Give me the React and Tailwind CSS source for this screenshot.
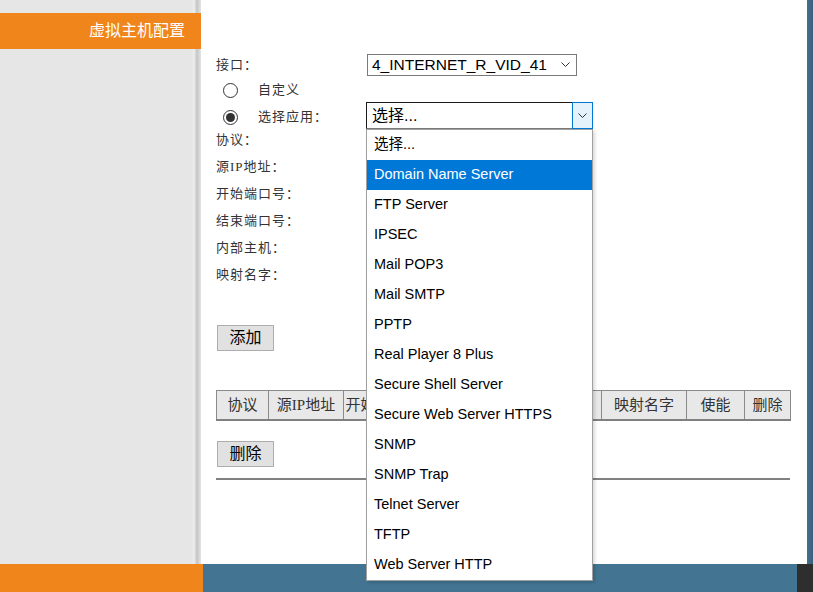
import React from 'react';

const labelFont = { fontFamily: '"Liberation Serif", "Noto Sans CJK SC", serif' };
const uiFont = { fontFamily: '"Liberation Sans", "Noto Sans CJK SC", sans-serif' };

const apps = [
  '选择...',
  'Domain Name Server',
  'FTP Server',
  'IPSEC',
  'Mail POP3',
  'Mail SMTP',
  'PPTP',
  'Real Player 8 Plus',
  'Secure Shell Server',
  'Secure Web Server HTTPS',
  'SNMP',
  'SNMP Trap',
  'Telnet Server',
  'TFTP',
  'Web Server HTTP',
];

const fields = ['协议：', '源IP地址：', '开始端口号：', '结束端口号：', '内部主机：', '映射名字：'];

const columns = [
  { name: '协议', w: 'w-[52px]' },
  { name: '源IP地址', w: 'w-[75px]' },
  { name: '开始端口号', w: 'w-[79px]' },
  { name: '结束端口号', w: 'w-[79px]' },
  { name: '内部主机', w: 'w-[100px]' },
  { name: '映射名字', w: 'w-[85px]' },
  { name: '使能', w: 'w-[58px]' },
  { name: '删除', w: 'w-[46px]' },
];

function Chevron({ className }) {
  return (
    <svg className={className} width="9" height="5" viewBox="0 0 9 5" fill="none">
      <path d="M0.5 0.5 L4.5 4.5 L8.5 0.5" stroke="#333" strokeWidth="1" />
    </svg>
  );
}

function Radio({ checked }) {
  return (
    <span className="ml-[7px] w-[15px] h-[15px] rounded-full border border-[#333] bg-white flex items-center justify-center shrink-0">
      {checked && <span className="w-[9px] h-[9px] rounded-full bg-[#333]" />}
    </span>
  );
}

function Button({ children }) {
  return (
    <button
      className="w-[57px] h-[26px] bg-[#e1e1e1] border border-[#adadad] text-[16px] text-black leading-none"
      style={uiFont}
    >
      {children}
    </button>
  );
}

export default function App() {
  return (
    <div className="w-[813px] h-[592px] overflow-hidden flex flex-col bg-white">
      <div className="flex h-[564px]">
        {/* sidebar */}
        <div className="w-[201px] shrink-0 bg-[linear-gradient(to_right,#e6e6e6_192px,#eeeeee_194px,#c4c4c4_197px,#d6d6d6_199px,#e4e4e4_201px)]">
          <div
            className="mt-[13px] h-[36px] bg-[#f0851b] text-white text-[16px] leading-[36px] text-right pr-[16px]"
            style={uiFont}
          >
            虚拟主机配置
          </div>
        </div>

        {/* content */}
        <div className="flex-1 relative pl-[15px] pr-[16px] pt-[51px] text-[13px] text-[#333] tracking-[1px]" style={labelFont}>
          <div className="flex h-[27px] items-center">
            <div className="w-[151px]">接口：</div>
            <div
              className="w-[210px] h-[22px] border border-[#7a7a7a] bg-white flex items-center justify-between pl-[4px] pr-[6px] text-[15.5px] text-black tracking-normal"
              style={uiFont}
            >
              <span>4_INTERNET_R_VID_41</span>
              <Chevron />
            </div>
          </div>

          <div className="flex h-[24px] items-center">
            <Radio />
            <span className="ml-[20px]">自定义</span>
          </div>

          <div className="flex h-[27px] items-center">
            <div className="w-[150px] flex items-center pt-[3px]">
              <Radio checked />
              <span className="ml-[20px]">选择应用：</span>
            </div>
            <div className="relative w-[227px] h-[27px] tracking-normal">
              <div className="w-full h-full border border-[#1a1a1a] border-b-[#7a7a7a] bg-white flex" style={uiFont}>
                <span className="flex-1 pl-[5px] text-[16px] text-black leading-[25px]">选择...</span>
                <span className="w-[21px] -mt-px -mr-px h-[27px] border border-[#0078d7] bg-[#e5f1fb] flex items-center justify-center">
                  <Chevron />
                </span>
              </div>
              <div
                className="absolute left-0 top-[27px] w-[227px] z-10 bg-white border border-[#a0a0a0] shadow-[2px_2px_3px_rgba(0,0,0,0.15)]"
                style={uiFont}
              >
                {apps.map((a, i) => (
                  <div
                    key={a}
                    className={
                      i === 1
                        ? 'h-[30px] flex items-center pl-[7px] text-[14.5px] bg-[#0078d7] text-white'
                        : 'h-[30px] flex items-center pl-[7px] text-[14.5px] text-black'
                    }
                  >
                    {a}
                  </div>
                ))}
              </div>
            </div>
          </div>

          <div className="-mt-[3px]">
            {fields.map((f) => (
              <div key={f} className="h-[27px] flex items-center">
                {f}
              </div>
            ))}
          </div>

          <div className="mt-[37px] ml-[1px] tracking-normal">
            <Button>添加</Button>
          </div>

          <table className="mt-[39px] w-[574px] table-fixed border-collapse border border-[#808080] border-b-2 text-[15px] text-[#333] tracking-normal">
            <thead>
              <tr className="h-[29px]">
                {columns.map((c) => (
                  <th key={c.name} className={`${c.w} border border-[#8a8a8a] bg-[#e8e8e8] font-normal text-center whitespace-nowrap overflow-hidden p-0`}>
                    {c.name}
                  </th>
                ))}
              </tr>
            </thead>
          </table>

          <div className="mt-[20px] ml-[1px] tracking-normal">
            <Button>删除</Button>
          </div>

          <div className="mt-[11px] w-[574px] h-[2px] bg-[#808080]" />
        </div>

        {/* right edge */}
        <div className="w-[7px] shrink-0 bg-[linear-gradient(to_right,#45708f,#385d78)]" />
      </div>

      {/* footer */}
      <div className="flex h-[28px]">
        <div className="w-[203px] bg-[#f0851b]" />
        <div className="flex-1 bg-[#437592]" />
        <div className="w-[16px] bg-[#2e2e2e]" />
      </div>
    </div>
  );
}
